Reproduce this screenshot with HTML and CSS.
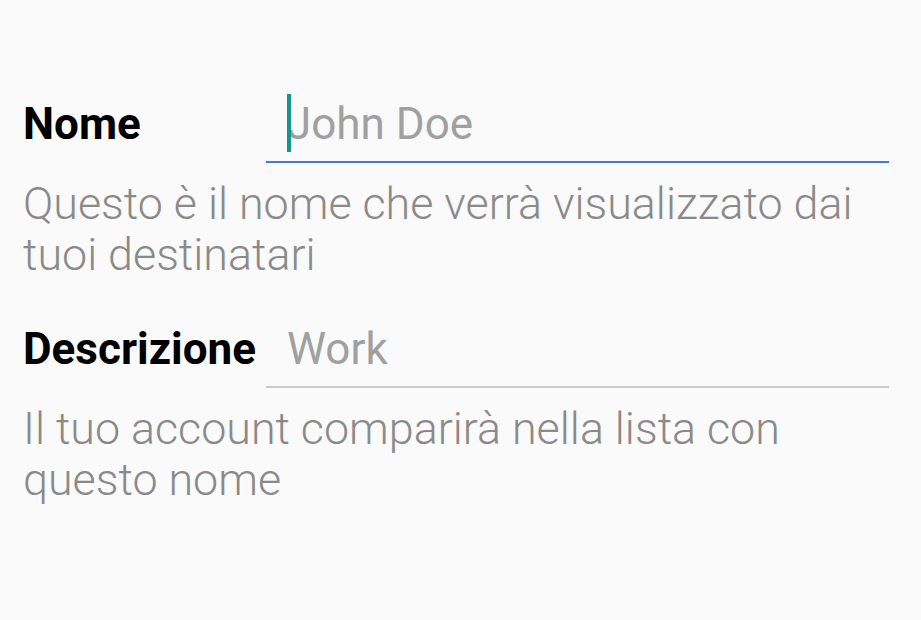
FILE: index.html
```html
<!DOCTYPE html>
<html lang="it">
<head>
<meta charset="utf-8">
<title>Account</title>
<link rel="stylesheet" href="styles.css">
</head>
<body>
<main class="form">
  <section class="field">
    <div class="row">
      <label class="label">Nome</label>
      <div class="input focused">
        <span class="caret"></span>
        <span class="placeholder">John Doe</span>
      </div>
    </div>
    <p class="helper">Questo è il nome che verrà visualizzato dai tuoi destinatari</p>
  </section>
  <section class="field">
    <div class="row">
      <label class="label">Descrizione</label>
      <div class="input">
        <span class="placeholder">Work</span>
      </div>
    </div>
    <p class="helper">Il tuo account comparirà nella lista con questo nome</p>
  </section>
</main>
</body>
</html>
```
FILE: styles.css
```css
html, body {
  margin: 0;
  padding: 0;
  background: #fafafa;
}

body {
  font-family: Roboto, "Noto Sans", sans-serif;
  font-size: 44px;
  line-height: 51px;
  width: 921px;
  height: 620px;
  overflow: hidden;
}

.form {
  padding: 99px 32px 0 23px;
}

.field + .field {
  margin-top: 44px;
}

.row {
  display: grid;
  grid-template-columns: 235px 1fr;
  column-gap: 8px;
  align-items: start;
}

.label {
  font-weight: 700;
  color: #000;
}

.input {
  position: relative;
  padding: 0 0 11px 21px;
  border-bottom: 2px solid #c9c9c9;
}

.input.focused {
  padding-bottom: 11px;
  border-bottom-color: #4179dc;
}

.placeholder {
  color: #a0a0a0;
}

.caret {
  position: absolute;
  left: 21px;
  top: -5px;
  width: 4px;
  height: 58px;
  background: #14968a;
}

.helper {
  margin: 15px 0 0;
  font-size: 44.8px;
  font-weight: 300;
  color: #8a8a8a;
}

.field + .field .helper {
  margin-top: 15px;
}
```
